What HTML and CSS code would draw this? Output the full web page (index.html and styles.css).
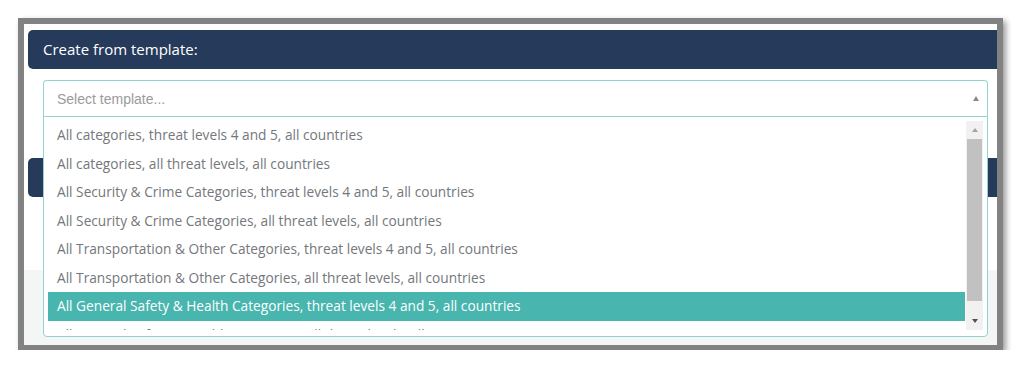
FILE: index.html
```html
<!DOCTYPE html>
<html>
<head>
<meta charset="utf-8">
<link rel="stylesheet" href="styles.css">
</head>
<body>
<div class="frame">
  <div class="bar">Create from template:</div>
  <div class="select-wrap">
    <div class="select">
      <span class="placeholder">Select template...</span>
      <span class="caret-up"></span>
    </div>
    <div class="dropdown">
      <ul class="options">
        <li>All categories, threat levels 4 and 5, all countries</li>
        <li>All categories, all threat levels, all countries</li>
        <li>All Security &amp; Crime Categories, threat levels 4 and 5, all countries</li>
        <li>All Security &amp; Crime Categories, all threat levels, all countries</li>
        <li>All Transportation &amp; Other Categories, threat levels 4 and 5, all countries</li>
        <li>All Transportation &amp; Other Categories, all threat levels, all countries</li>
        <li class="active">All General Safety &amp; Health Categories, threat levels 4 and 5, all countries</li>
        <li>All General Safety &amp; Health Categories, all threat levels, all countries</li>
      </ul>
      <div class="scrollbar">
        <span class="sb-up"></span>
        <span class="sb-thumb"></span>
        <span class="sb-down"></span>
      </div>
    </div>
  </div>
  <div class="bar bar-second"></div>
  <div class="gray-area"></div>
</div>
</body>
</html>
```
FILE: styles.css
```css
html, body {
  margin: 0;
  padding: 0;
  background: #ffffff;
}

body {
  font-family: "Open Sans", "Liberation Sans", sans-serif;
}

.frame {
  position: relative;
  margin: 18px 0 0 18px;
  width: 985px;
  height: 332px;
  box-sizing: border-box;
  border: 6px solid #828282;
  border-bottom-width: 5px;
  background: #ffffff;
  box-shadow: 3px 3px 6px rgba(0, 0, 0, 0.4);
  overflow: hidden;
  display: flex;
  flex-direction: column;
}

.bar {
  margin: 6px 0 0 4px;
  height: 39px;
  flex: none;
  background: #263a5b;
  border-radius: 5px 0 0 5px;
  color: #ffffff;
  font-size: 15px;
  line-height: 39px;
  padding-left: 15px;
}

.bar-second {
  margin-top: 42px;
}

.gray-area {
  margin-top: 73px;
  flex: 1;
  background: #f4f5f5;
}

.select-wrap {
  position: relative;
  margin: 11px 0 0 19px;
  width: 945px;
  flex: none;
  z-index: 2;
}

.select {
  height: 36px;
  box-sizing: border-box;
  border: 1px solid #93d3cf;
  border-bottom: none;
  border-radius: 4px 4px 0 0;
  background: #ffffff;
  display: flex;
  align-items: center;
  justify-content: space-between;
  padding: 0 8px 0 13px;
}

.placeholder {
  font-family: "Liberation Sans", Arial, sans-serif;
  font-size: 14px;
  color: #9b9b9b;
}

.caret-up {
  width: 0;
  height: 0;
  border-left: 3.5px solid transparent;
  border-right: 3.5px solid transparent;
  border-bottom: 5px solid #8a8a8a;
}

.dropdown {
  position: absolute;
  top: 100%;
  left: 0;
  width: 945px;
  height: 221px;
  box-sizing: border-box;
  border: 1px solid #93d3cf;
  border-radius: 0 0 4px 4px;
  background: #ffffff;
  padding: 4px 4px 5px 4px;
  display: flex;
}

.options {
  list-style: none;
  margin: 0;
  padding: 0;
  flex: 1;
  height: 209px;
  overflow: hidden;
  background: #ffffff;
}

.options li {
  height: 28.5px;
  line-height: 27.5px;
  padding-left: 9px;
  font-size: 13.7px;
  color: #74777b;
  white-space: nowrap;
}

.options li.active {
  background: #48b5ae;
  color: #ffffff;
}

.scrollbar {
  width: 17px;
  height: 209px;
  margin-left: 1px;
  background: #f1f1f1;
  display: flex;
  flex-direction: column;
  align-items: center;
}

.sb-up {
  margin-top: 7px;
  width: 0;
  height: 0;
  border-left: 3.5px solid transparent;
  border-right: 3.5px solid transparent;
  border-bottom: 4px solid #a3a3a3;
}

.sb-thumb {
  margin-top: 7px;
  width: 15px;
  height: 162px;
  background: #c1c1c1;
}

.sb-down {
  margin-top: 18px;
  width: 0;
  height: 0;
  border-left: 3.5px solid transparent;
  border-right: 3.5px solid transparent;
  border-top: 4px solid #505050;
}
```
